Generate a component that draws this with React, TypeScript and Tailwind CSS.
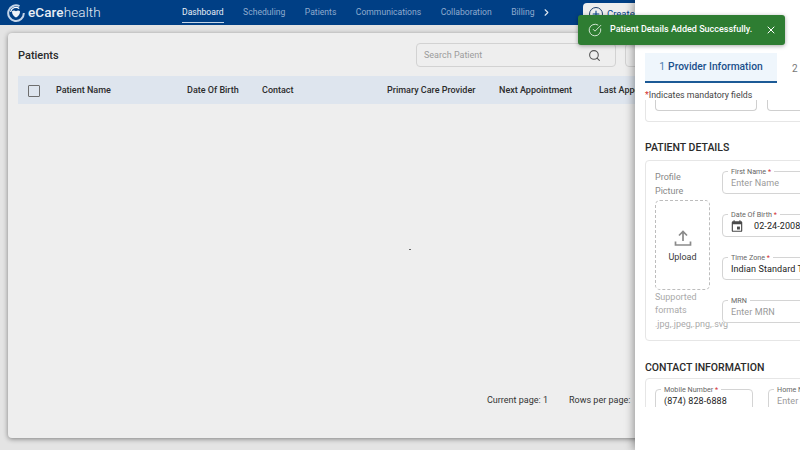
import { ChevronRight, CircleCheckBig, Plus, Search, X } from "lucide-react";

const navItems = ["Scheduling", "Patients", "Communications", "Collaboration", "Billing"];

const columns = [
  { label: "Patient Name", width: "w-[131px]" },
  { label: "Date Of Birth", width: "w-[75px]" },
  { label: "Contact", width: "w-[125px]" },
  { label: "Primary Care Provider", width: "w-[112px]" },
  { label: "Next Appointment", width: "w-[100px]" },
  { label: "Last Appointment", width: "w-[100px]" },
];

function Logo() {
  return (
    <svg width="18" height="18" viewBox="0 0 18 18" className="shrink-0">
      <path d="M12.500 2.200A7.800 7.800 0 1 0 16.800 9" fill="none" stroke="#c3d4e8" strokeWidth="2" />
      <path d="M3.600 8a5.500 5.500 0 0 1 8.600-3.600" fill="none" stroke="#ffffff" strokeWidth="1.200" />
      <path d="M5 7.200c1.400-1 2.800-.8 4 .1 1.200-.9 2.600-1.100 4-.1.300 2.800-1.700 5-4 6.300-2.300-1.300-4.300-3.500-4-6.300z" fill="#eef3f9" />
    </svg>
  );
}

function Field({ label, required, value, placeholder, className, children }: {
  label: string;
  required?: boolean;
  value?: string;
  placeholder?: string;
  className: string;
  children?: React.ReactNode;
}) {
  return (
    <fieldset className={`border border-[#d4d4d4] rounded-[4px] px-2 min-w-0 overflow-hidden ${className}`}>
      <legend className="px-[3px] ml-[-3px] text-[7.2px] leading-[9px] text-[#666] whitespace-nowrap">
        {label}
        {required && <span className="text-[#d32f2f]"> *</span>}
      </legend>
      <div className="flex items-center gap-[10px] text-[9px] leading-[14px] tracking-[0.1px] whitespace-nowrap">
        {children}
        {value ? <span className="text-[#222]">{value}</span> : <span className="text-[#9a9a9a]">{placeholder}</span>}
      </div>
    </fieldset>
  );
}

export default function App() {
  return (
    <div className="relative w-[800px] h-[450px] overflow-hidden bg-[#e4e4e4] font-['Roboto',sans-serif]">
      {/* Header */}
      <header className="flex items-center h-[25px] bg-[#003f85] pl-[7px]">
        <Logo />
        <div className="ml-[3px] w-[154px] text-[13.5px] leading-[25px] text-[#e8eef6] tracking-[0.1px]">
          <span className="font-medium">eCare</span>
          <span className="font-light">health</span>
        </div>
        <nav className="flex items-center h-[25px] gap-[19.5px] text-[8.6px]">
          <div className="relative h-full flex items-center text-[#e8eef6]">
            Dashboard
            <div className="absolute left-0 right-0 bottom-[2px] h-[1px] bg-[#c6d6e8]" />
          </div>
          {navItems.map((item) => (
            <div key={item} className="text-[#8fabcf]">{item}</div>
          ))}
          <ChevronRight size={11} strokeWidth={2.4} className="text-[#dfe8f2] ml-[-12.5px]" />
        </nav>
        <div className="absolute left-[583px] top-[3px] flex items-center gap-[4px] w-[60px] h-[22px] bg-[#eeeeee] rounded-t-[4px] pl-[6px] text-[9.500px] text-[#003f85]">
          <span className="flex items-center justify-center w-[14px] h-[14px] rounded-full border-[1.5px] border-[#1f3f6b] shrink-0">
            <Plus size={10} strokeWidth={2.5} />
          </span>
          Create
        </div>
      </header>

      {/* Patients card */}
      <main className="pl-[8px] pt-[8px]">
        <div className="w-[640px] h-[405px] bg-[#eeeeee] rounded-[4px] shadow-[0_1px_5px_rgba(0,0,0,0.45)] px-[10px]">
          <div className="flex items-center justify-between h-[43px] pt-[1px]">
            <h1 className="pt-[2px] text-[11px] font-medium text-[#2a2a2a]">Patients</h1>
            <div className="flex items-center gap-[9px] mr-[-7px]">
              <div className="flex items-center justify-between w-[200px] h-[24px] border border-[#d2d2d2] rounded-[4px] pl-[7px] pr-[14px] text-[9px] text-[#9c9c9c]">
                <span className="mt-[1px]">Search Patient</span>
                <Search size={13} className="text-[#555]" />
              </div>
              <div className="w-[20px] h-[24px] border border-[#d2d2d2] rounded-[4px]" />
            </div>
          </div>
          <div className="flex items-center h-[28px] bg-[#dee5ee] pl-[10px] pt-[1px] text-[9px] font-medium text-[#2c2c2c] whitespace-nowrap overflow-hidden">
            <div className="w-[12px] h-[12px] border-[1.5px] border-[#6e6e6e] rounded-[1px] mr-[16px] shrink-0" />
            {columns.map((col) => (
              <div key={col.label} className={`${col.width} shrink-0`}>{col.label}</div>
            ))}
          </div>
          <div className="pt-[145px] pl-[391px] h-[290px]">
            <div className="w-[2px] h-[1px] bg-[#666]" />
          </div>
          <div className="flex gap-[21px] pl-[469px] text-[9px] text-[#333] whitespace-nowrap">
            <span>Current page: 1</span>
            <span>Rows per page:</span>
          </div>
        </div>
      </main>

      {/* Add patient drawer */}
      <aside className="absolute left-[635px] top-0 w-[165px] h-[450px] bg-white shadow-[-2px_0_8px_rgba(0,0,0,0.35)]">
        <div className="flex items-center ml-[10px] mt-[52px] h-[31px] pt-[1px] whitespace-nowrap">
          <div className="flex items-center justify-center gap-[3px] w-[132px] h-full bg-[#eff6fc] border-b-[2px] border-[#1c5a96] text-[10.250px] font-medium text-[#1a4f8b]">
            <span className="font-normal text-[#4a7cb0]">1</span> Provider Information
          </div>
          <span className="ml-[15px] text-[10px] text-[#777]">2</span>
        </div>
        <p className="ml-[10px] h-[17px] pt-[7px] text-[8.800px] leading-[11px] text-[#444] whitespace-nowrap">
          <span className="text-[#d32f2f]">*</span>Indicates mandatory fields
        </p>
        <div className="h-[307px] overflow-hidden pl-[10px]">
          {/* Provider card, scrolled out of view above */}
          <div className="flex gap-[10px] w-[170px] h-[22px] border border-t-0 border-[#e6e6e6] rounded-b-[4px] pl-[9px]">
            <div className="w-[102px] h-[11px] border border-t-0 border-[#cfcfcf] rounded-b-[4px] shrink-0" />
            <div className="w-[60px] h-[11px] border border-t-0 border-[#cfcfcf] rounded-b-[4px] shrink-0" />
          </div>

          <h2 className="mt-[19px] text-[10.500px] leading-[13px] font-medium text-[#2a2a2a]">PATIENT DETAILS</h2>
          <div className="flex w-[170px] h-[181px] mt-[6px] border border-[#e6e6e6] rounded-[4px] pl-[9px]">
            <div className="w-[67px] shrink-0 text-[9px] leading-[13.500px] text-[#888]">
              <div className="pt-[10px] w-[50px]">Profile Picture</div>
              <div className="flex flex-col items-center w-[55px] h-[90px] mt-[2px] border border-dashed border-[#bdbdbd] rounded-[5px] pt-[27px]">
                <svg width="20" height="20" viewBox="0 0 20 20" fill="none" stroke="#8a8a8a" strokeWidth="1.700">
                  <path d="M10 13V3.500M6 7.500 10 3.500l4 4M2.500 13.500v3.500h15v-3.500" />
                </svg>
                <span className="mt-[3px] text-[#3a3a3a]">Upload</span>
              </div>
              <div className="w-[76px] pt-[0.5px] text-[#aaa] whitespace-nowrap">
                Supported<br />formats<br />.jpg,.jpeg,.png,.svg
              </div>
            </div>
            <div className="flex flex-col gap-[16px] pt-[6px] shrink-0">
              <Field className="w-[100px] h-[27px]" label="First Name" required placeholder="Enter Name" />
              <Field className="w-[100px] h-[27px]" label="Date Of Birth" required value="02-24-2008">
                <svg width="14" height="14" viewBox="0 0 24 24" fill="#4a4a4a" className="ml-[-1px] shrink-0">
                  <path d="M19 4h-1V2h-2v2H8V2H6v2H5a2 2 0 0 0-2 2v14a2 2 0 0 0 2 2h14a2 2 0 0 0 2-2V6a2 2 0 0 0-2-2zm0 16H5V9h14v11z" />
                  <rect x="12" y="13" width="5" height="5" />
                </svg>
              </Field>
              <Field className="w-[100px] h-[27px]" label="Time Zone" required value="Indian Standard Time" />
              <Field className="w-[100px] h-[27px]" label="MRN" placeholder="Enter MRN" />
            </div>
          </div>

          <h2 className="mt-[20px] text-[10.500px] leading-[13px] font-medium text-[#2a2a2a]">CONTACT INFORMATION</h2>
          <div className="flex gap-[15px] w-[170px] h-[40px] mt-[4px] border border-[#e6e6e6] rounded-[4px] pl-[9px] pt-[6px]">
            <Field className="w-[98px] h-[32px] shrink-0" label="Mobile Number" required value="(874) 828-6888" />
            <Field className="w-[60px] h-[32px] shrink-0" label="Home Number" placeholder="Enter" />
          </div>
        </div>
      </aside>

      {/* Toast */}
      <div className="absolute left-[578px] top-[15px] flex items-center w-[207px] h-[30px] bg-[#2e7d32] rounded-[3px] shadow-[0_1px_4px_rgba(0,0,0,0.35)] pl-[10px] text-white">
        <CircleCheckBig size={14} strokeWidth={1.6} className="text-[#dcecdc] shrink-0" />
        <span className="ml-[8px] text-[9px] font-medium whitespace-nowrap">Patient Details Added Successfully.</span>
        <X size={12} strokeWidth={2} className="ml-[13px]" />
      </div>
    </div>
  );
}
